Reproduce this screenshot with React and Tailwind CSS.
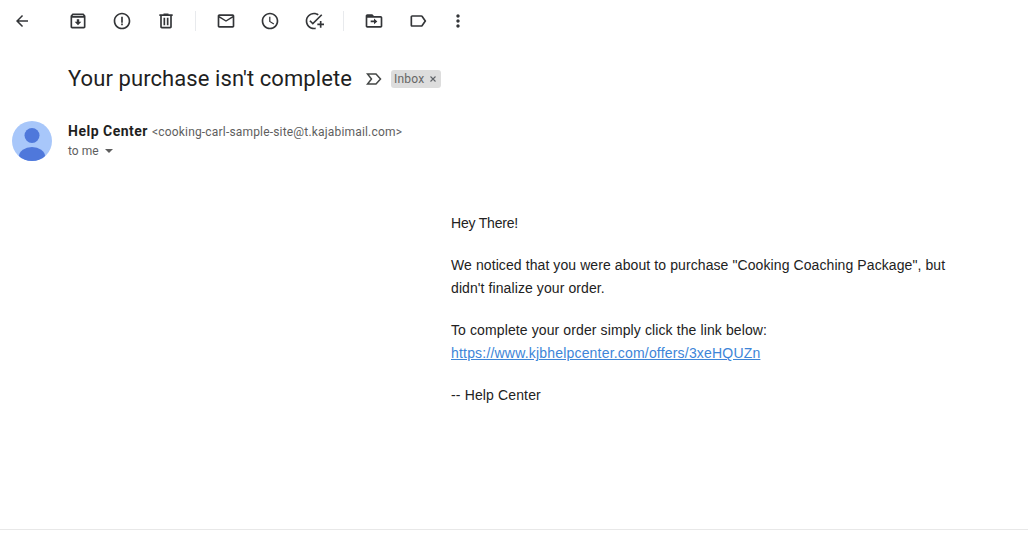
const P = {
  back: "M20 11H7.83l5.59-5.59L12 4l-8 8 8 8 1.41-1.41L7.83 13H20v-2z",
  archive: "M20.54 5.23l-1.39-1.68C18.88 3.21 18.47 3 18 3H6c-.47 0-.88.21-1.16.55L3.46 5.23C3.17 5.57 3 6.02 3 6.5V19c0 1.1.9 2 2 2h14c1.1 0 2-.9 2-2V6.5c0-.48-.17-.93-.46-1.27zM6.24 5h11.52l.81.97H5.44l.8-.97zM5 19V8h14v11H5zm8.45-9h-2.9v3H8l4 4 4-4h-2.55z",
  report: "M12 2C6.48 2 2 6.48 2 12s4.48 10 10 10 10-4.48 10-10S17.52 2 12 2zm0 18c-4.42 0-8-3.58-8-8s3.58-8 8-8 8 3.58 8 8-3.58 8-8 8zM11 7h2v7h-2zM11 15h2v2h-2z",
  trash: "M15 4V3H9v1H4v2h1v13c0 1.1.9 2 2 2h10c1.1 0 2-.9 2-2V6h1V4h-5zm2 15H7V6h10v13zM9 8h2v9H9zm4 0h2v9h-2z",
  mail: "M20 4H4c-1.1 0-2 .9-2 2v12c0 1.1.9 2 2 2h16c1.1 0 2-.9 2-2V6c0-1.1-.9-2-2-2zm0 14H4V8l8 5 8-5v10zm-8-7L4 6h16l-8 5z",
  clock: "M11.99 2C6.47 2 2 6.48 2 12s4.47 10 9.99 10C17.52 22 22 17.52 22 12S17.52 2 11.99 2zM12 20c-4.42 0-8-3.58-8-8s3.58-8 8-8 8 3.58 8 8-3.58 8-8 8zm.5-13H11v6l5.25 3.15.75-1.23-4.5-2.67z",
  task: "M22 5.18L10.59 16.6l-4.24-4.24 1.41-1.41 2.83 2.83 10-10L22 5.18zM12 20c-4.42 0-8-3.58-8-8s3.58-8 8-8c1.58 0 3.04.46 4.28 1.25l1.44-1.44C16.1 2.67 14.13 2 12 2 6.48 2 2 6.48 2 12s4.48 10 10 10c.68 0 1.35-.07 2-.2v-2.05c-.64.16-1.31.25-2 .25zM19 15v-3h2v3h3v2h-3v3h-2v-3h-3v-2h3z",
  move: "M20 6h-8l-2-2H4c-1.11 0-1.99.89-1.99 2L2 18c0 1.11.89 2 2 2h16c1.11 0 2-.89 2-2V8c0-1.11-.89-2-2-2zm0 12H4V8h16v10zm-8-2l4-3.5-4-3.5v2.5H8v2h4V16z",
  label: "M17.63 5.84C17.27 5.33 16.67 5 16 5L5 5.01C3.9 5.01 3 5.9 3 7v10c0 1.1.9 1.99 2 1.99L16 19c.67 0 1.27-.33 1.63-.84L22 12l-4.37-6.16zM16 17H5V7h11l3.55 5L16 17z",
  more: "M12 8c1.1 0 2-.9 2-2s-.9-2-2-2-2 .9-2 2 .9 2 2 2zm0 2c-1.1 0-2 .9-2 2s.9 2 2 2 2-.9 2-2-.9-2-2-2zm0 6c-1.1 0-2 .9-2 2s.9 2 2 2 2-.9 2-2-.9-2-2-2z",
};

function Tool({ d, className = "w-11", icon = "w-5 h-5" }) {
  return (
    <div className={`${className} h-5 flex items-center justify-center shrink-0`}>
      <svg viewBox="0 0 24 24" className={`${icon} fill-[#333538]`}><path d={d} /></svg>
    </div>
  );
}

function Sep() {
  return <div className="w-px h-5 bg-[#e8eaed] ml-[7px] mr-2 shrink-0" />;
}

export default function App() {
  return (
    <div className="w-[1028px] h-[533px] bg-white overflow-hidden flex flex-col font-['Roboto',sans-serif]">
      <div className="flex items-center h-[42px] shrink-0">
        <Tool d={P.back} icon="w-[18px] h-[18px]" />
        <div className="w-3 shrink-0" />
        <Tool d={P.archive} />
        <Tool d={P.report} />
        <Tool d={P.trash} />
        <Sep />
        <Tool d={P.mail} />
        <Tool d={P.clock} />
        <Tool d={P.task} />
        <Sep />
        <Tool d={P.move} />
        <Tool d={P.label} />
        <Tool d={P.more} className="w-9" />
      </div>

      <div className="flex items-center h-[32px] mt-[21px] pl-[68px] shrink-0">
        <h1 className="text-[22px] leading-7 font-normal text-[#1f1f1f] font-['Roboto',sans-serif] tracking-[0.08px]">Your purchase isn't complete</h1>
        <svg viewBox="0 0 16 12" className="w-4 h-3 ml-[14px] fill-none stroke-[#444746] stroke-[1.5]">
          <path d="M1.5 1h8.5l4.5 5-4.5 5H1.5l4-5z" />
        </svg>
        <span className="ml-[9px] h-[18px] pl-[3px] pr-1 rounded-[3px] bg-[#dddddd] flex items-center text-xs text-[#666666] gap-[5px] tracking-[0.2px]">
          Inbox
          <svg viewBox="0 0 8 8" className="w-2 h-2 stroke-[#5f6368] stroke-[1.1]"><path d="M1.5 1.5l5 5M6.5 1.5l-5 5" /></svg>
        </span>
      </div>

      <div className="flex mt-[26px] pl-3 shrink-0">
        <svg viewBox="0 0 40 40" className="w-10 h-10 shrink-0">
          <defs>
            <clipPath id="av"><circle cx="20" cy="20" r="20" /></clipPath>
          </defs>
          <g clipPath="url(#av)">
            <rect width="40" height="40" fill="#a8c7fa" />
            <circle cx="20" cy="14.5" r="7.5" fill="#4f78db" />
            <ellipse cx="20" cy="35" rx="13" ry="9" fill="#4f78db" />
          </g>
        </svg>
        <div className="ml-4 flex flex-col">
          <div className="flex items-baseline h-5 leading-5">
            <span className="text-sm font-bold text-[#1f1f1f] tracking-[0.5px]">Help Center</span>
            <span className="ml-1 text-xs text-[#5e5e5e] tracking-[0.18px]">&lt;cooking-carl-sample-site@t.kajabimail.com&gt;</span>
          </div>
          <div className="flex items-center h-5 text-xs text-[#5e5e5e]">
            to me
            <span className="ml-[6px] w-0 h-0 border-x-[4px] border-x-transparent border-t-[4px] border-t-[#5e5e5e]" />
          </div>
        </div>
      </div>

      <div className="ml-[451px] w-[500px] mt-[51px] text-sm leading-[23px] text-[#222222] font-['Liberation_Sans',sans-serif] flex flex-col gap-[19px]">
        <p className="tracking-[-0.2px]">Hey There!</p>
        <p className="tracking-[0.09px]">We noticed that you were about to purchase "Cooking Coaching Package", but didn't finalize your order.</p>
        <p className="tracking-[0.11px]">
          To complete your order simply click the link below:
          <br />
          <a className="text-[#3d85d8] underline tracking-[0.19px]">https://www.kjbhelpcenter.com/offers/3xeHQUZn</a>
        </p>
        <p className="tracking-[0.14px]">-- Help Center</p>
      </div>

      <div className="mt-auto mb-[3px] h-px bg-[#e8e8e8] shrink-0" />
    </div>
  );
}
